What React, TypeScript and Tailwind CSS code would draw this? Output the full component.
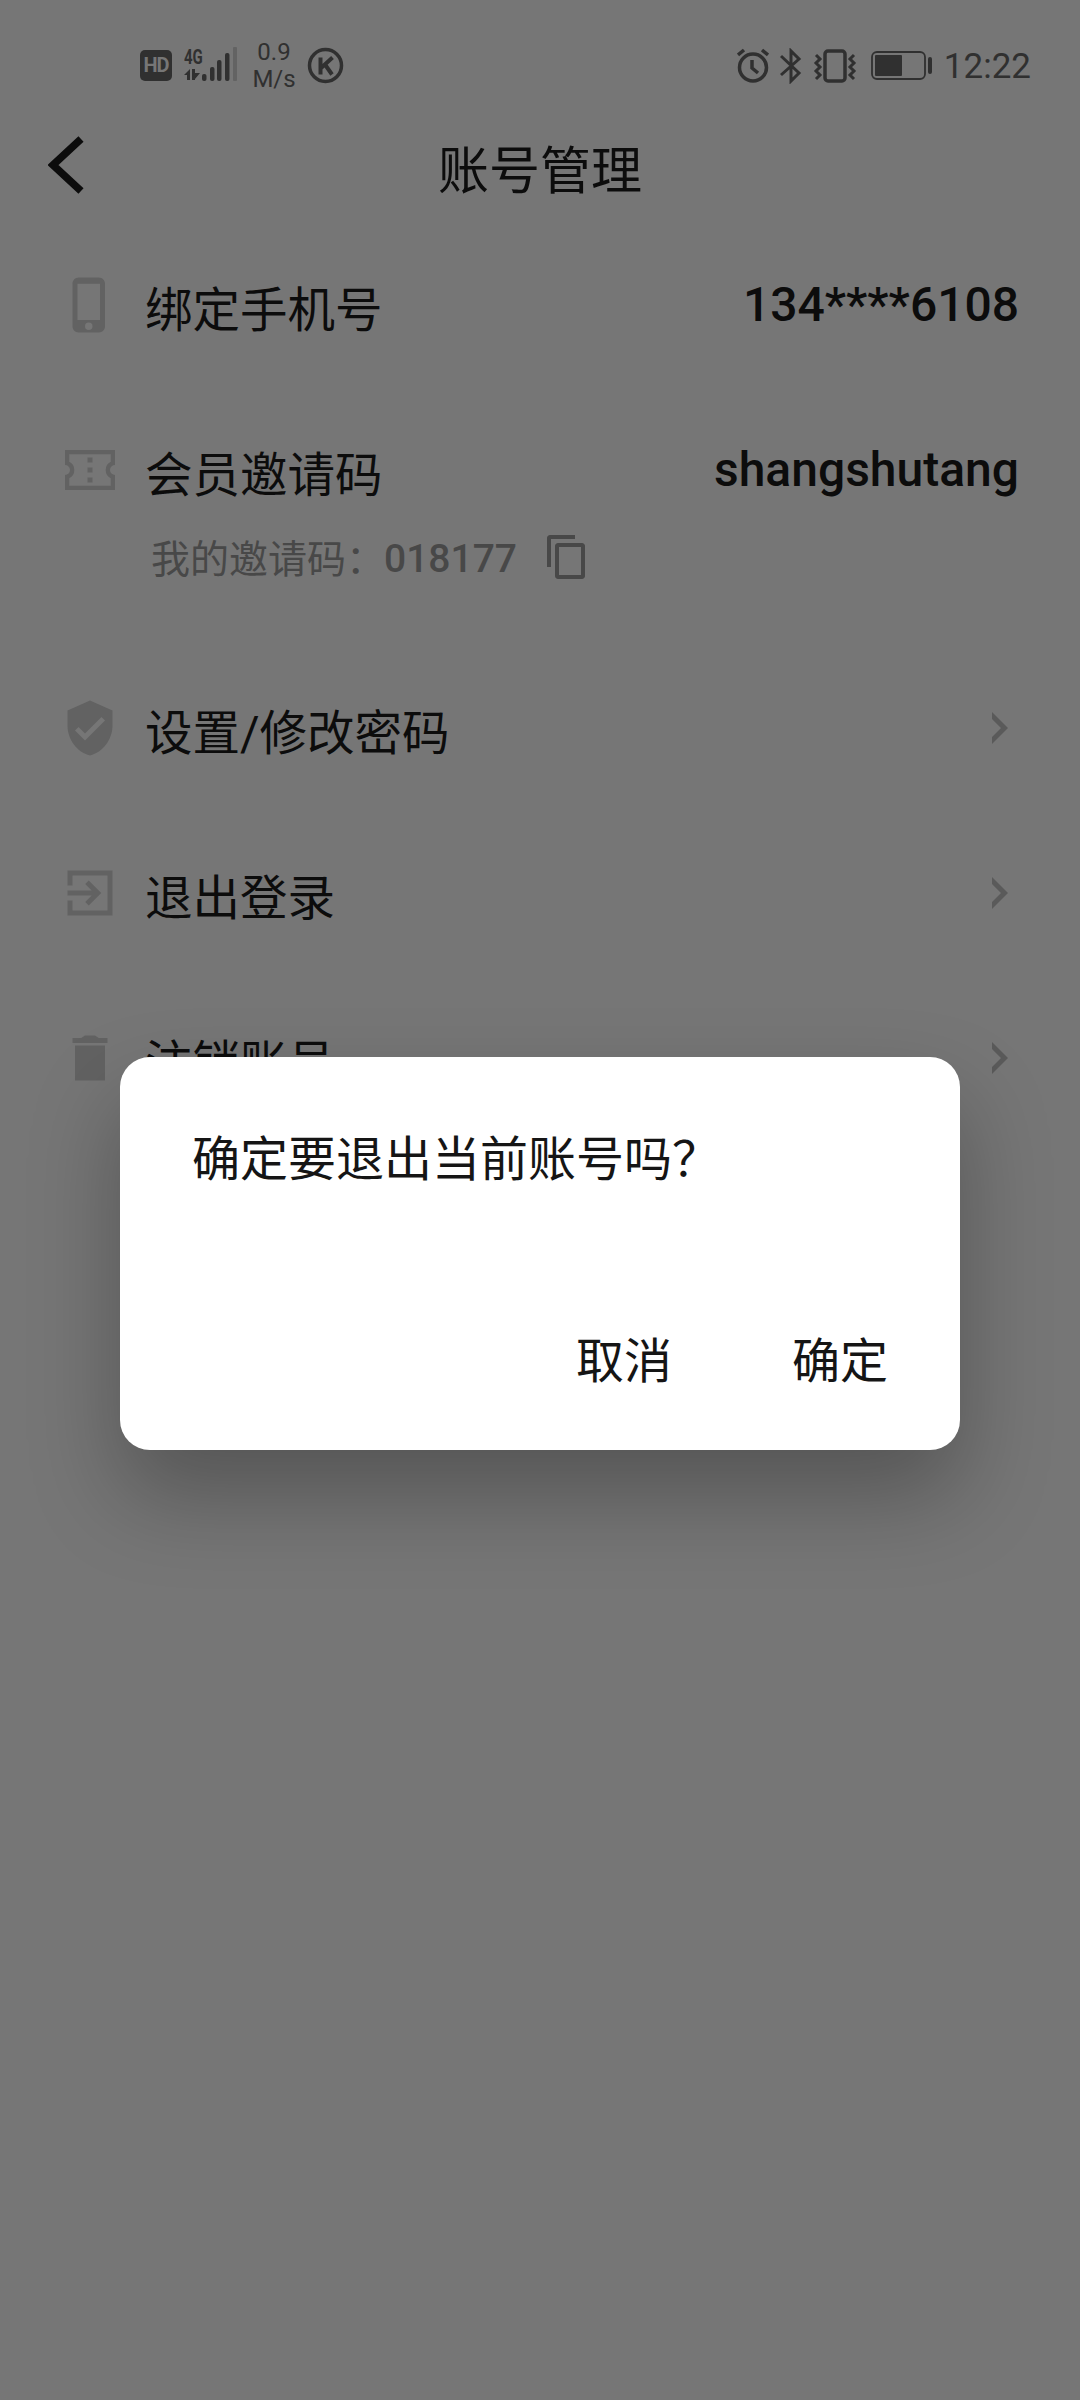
import type { ReactNode } from "react";
import { MdVerifiedUser } from "react-icons/md";

function StatusBar() {
  return (
    <div className="h-[130px] pt-[36px] pl-[140px] pr-[49px] flex items-start justify-between text-[#303030]">
      <div className="flex items-start">
        <div className="mt-[14px] w-[32px] h-[31px] rounded-[5px] bg-[#303030] text-[#767676] text-[20px] leading-[31px] font-bold text-center tracking-[-1px]">
          HD
        </div>
        <div className="ml-[12px] mt-[11px] w-[54px] h-[36px] relative">
          <span className="absolute left-0 top-0 text-[20px] leading-[20px] font-bold scale-x-[0.75] origin-left">4G</span>
          <svg width="54" height="36" viewBox="0 0 54 36" className="absolute inset-0" fill="currentColor">
            <path d="M0 28l6-6v11H3v-5zM8 22h3v4l5 0-5 6v1H8z" />
            <rect x="18" y="27" width="4.500" height="7" rx="2" />
            <rect x="26" y="20" width="4.500" height="14" rx="2" />
            <rect x="33" y="13" width="4.500" height="21" rx="2" />
            <rect x="41" y="6" width="4.500" height="28" rx="2" />
            <rect x="49" y="0" width="4" height="34" rx="1" fill="#636363" />
          </svg>
        </div>
        <div className="ml-[14px] mt-[3px] w-[44px] flex flex-col items-center text-[24px] leading-[27px]">
          <span>0.9</span>
          <span>M/s</span>
        </div>
        <svg width="37" height="37" viewBox="0 0 37 37" className="ml-[11px] mt-[11px]" fill="none" stroke="currentColor" strokeWidth="3.500">
          <circle cx="18.500" cy="18.500" r="16" />
          <path d="M13.500 10.500v17M25.500 10.500l-12 11M18 17.500l7 10" strokeWidth="4" />
        </svg>
      </div>
      <div className="flex items-start">
        <svg width="32" height="36" viewBox="0 0 32 36" className="mt-[12px]" fill="none" stroke="currentColor" strokeWidth="3.500">
          <circle cx="16" cy="19.500" r="13.500" />
          <path d="M15 12v8l6 5M1 7l6-5M31 7l-6-5" />
        </svg>
        <svg width="22" height="36" viewBox="0 0 22 36" className="ml-[11px] mt-[12px]" fill="none" stroke="currentColor" strokeWidth="3">
          <path d="M1 8l18 17-8 8V3l8 8L1 27" />
        </svg>
        <svg width="44" height="36" viewBox="0 0 44 36" className="ml-[11px] mt-[12px]" fill="none" stroke="currentColor" strokeWidth="3.500">
          <rect x="12" y="3" width="20" height="30" rx="3" />
          <path d="M3 7l4 4-4 4 4 4-4 4 4 4-4 4M41 7l-4 4 4 4-4 4 4 4-4 4 4 4" strokeWidth="3" />
        </svg>
        <svg width="62" height="30" viewBox="0 0 62 30" className="ml-[14px] mt-[15px]">
          <rect x="1" y="1" width="53" height="27" rx="5" fill="none" stroke="currentColor" strokeWidth="1.800" />
          <rect x="4" y="4" width="27" height="21" rx="1" fill="currentColor" />
          <rect x="57" y="6" width="4" height="17" rx="2" fill="currentColor" />
        </svg>
        <span className="ml-[11px] mt-[11px] text-[35px] leading-[40px]">12:22</span>
      </div>
    </div>
  );
}

function Icon({ children, className }: { children: ReactNode; className?: string }) {
  return (
    <svg viewBox="0 0 24 24" width="1em" height="1em" fill="currentColor" fillRule="evenodd" className={className}>
      {children}
    </svg>
  );
}

const phone = (
  <Icon>
    <path d="M15.500 1h-8C6.120 1 5 2.120 5 3.500v17C5 21.880 6.120 23 7.500 23h8c1.380 0 2.500-1.120 2.500-2.500v-17C18 2.120 16.880 1 15.500 1zM11.500 22a1.500 1.500 0 1 1 0-3 1.500 1.500 0 0 1 0 3zM16 18H7V3.500h9z" />
  </Icon>
);

const ticket = (
  <Icon>
    <path d="M2 4h20v6a2 2 0 0 0 0 4v6H2v-6a2 2 0 0 0 0-4zM3.700 5.700v3a3.700 3.700 0 0 1 0 6.600v3h16.600v-3a3.700 3.700 0 0 1 0-6.600v-3z" />
    <path d="M11 7h2v2h-2zM11 11h2v2h-2zM11 15h2v2h-2z" />
  </Icon>
);

const exit = (
  <Icon>
    <path d="M10.090 15.590L11.500 17l5-5-5-5-1.410 1.410L12.670 11H3v2h9.670zM3 3h18v18H3v-6h2v4h14V5H5v4H3z" />
  </Icon>
);

const trash = (
  <Icon>
    <path d="M6 21h12V7H6zM19 4h-3.500l-1.500-1h-4L8.500 4H5v2h14z" />
  </Icon>
);

interface RowProps {
  icon: ReactNode;
  label: string;
  value?: string;
}

function Row({ icon, label, value }: RowProps) {
  return (
    <div className="h-[165px] pl-[60px] flex items-center">
      <span className="text-[60px] text-[#626262]">{icon}</span>
      <span className="ml-[25px] mt-[13px] text-[47.500px] leading-[60px] text-[#0c0c0c]">{label}</span>
      {value ? (
        <span className="ml-auto mr-[61px] text-[48px] leading-[60px] font-medium text-[#0c0c0c]">{value}</span>
      ) : (
        <svg width="16" height="32" viewBox="0 0 16 32" className="ml-auto mr-[72px]" fill="#5a5a5a">
          <path d="M0 0l16 16L0 32v-7l9-9-9-9z" />
        </svg>
      )}
    </div>
  );
}

export default function App() {
  return (
    <div className="relative w-[1080px] h-[2400px] overflow-hidden bg-[#767676] font-['Roboto','Noto_Sans_CJK_SC',sans-serif]">
      <StatusBar />

      <div className="h-[92px] grid grid-cols-[1fr_auto_1fr] items-center text-[#0c0c0c]">
        <svg width="36" height="60" viewBox="0 0 36 60" className="ml-[48px] -mt-[22px]" fill="none" stroke="currentColor" strokeWidth="7.500">
          <path d="M33 4L5 30l28 26" />
        </svg>
        <span className="-mt-[9px] text-[51px] leading-[60px]">账号管理</span>
      </div>

      <Row icon={phone} label="绑定手机号" value="134****6108" />
      <Row icon={ticket} label="会员邀请码" value="shangshutang" />
      <div className="h-[93px] pl-[151px] flex items-start text-[39px] leading-[50px] text-[#484848]">
        <span className="-mt-[17px]">我的邀请码：</span>
        <span className="-ml-[1px] -mt-[18px] font-medium">018177</span>
        <Icon className="ml-[26px] -mt-[19px] text-[48px]">
          <path d="M16 1H3.500C2.700 1 2 1.700 2 2.500V17h2V3h12zM19.500 5h-12C6.700 5 6 5.700 6 6.500v15c0 .8.7 1.500 1.500 1.500h12c.8 0 1.500-.7 1.500-1.500v-15c0-.8-.7-1.500-1.500-1.500zM19 21H8V7h11z" />
        </Icon>
      </div>
      <Row icon={<MdVerifiedUser />} label="设置/修改密码" />
      <Row icon={exit} label="退出登录" />
      <Row icon={trash} label="注销账号" />

      {/* confirm dialog */}
      <div className="absolute left-[120px] top-[1057px] w-[840px] h-[393px] rounded-[30px] bg-white text-[#151515] text-[48px] leading-[60px] px-[72px] pt-[73px] pb-[58px] flex flex-col justify-between shadow-[0_45px_90px_rgba(0,0,0,0.28)]">
        <p>确定要退出当前账号吗？</p>
        <div className="flex justify-end gap-[120px]">
          <button>取消</button>
          <button>确定</button>
        </div>
      </div>
    </div>
  );
}
